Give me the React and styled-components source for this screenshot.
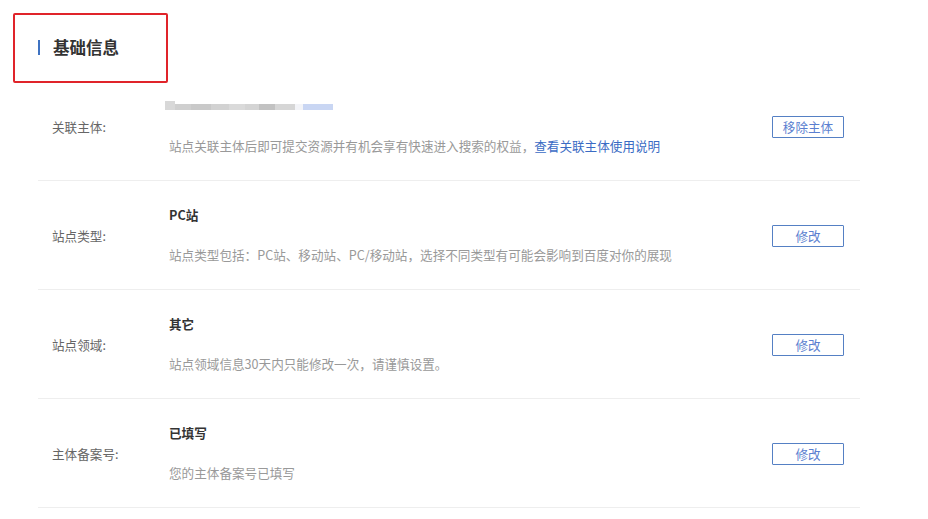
import React from "react";
import styled, { createGlobalStyle } from "styled-components";

const GlobalStyle = createGlobalStyle`
    body {
        margin: 0;
        background: #fff;
        font-family: "Noto Sans CJK SC", "Noto Sans", sans-serif;
    }
`

const Container = styled.div`
    position: relative;
    width: 928px;
    height: 519px;
    overflow: hidden;
    background: #fff;
`
const Header = styled.div`
    height: 72px;
    box-sizing: border-box;
    padding: 37px 0 0 38px;
    display: flex;
    align-items: flex-start;
`
const Bar = styled.span`
    width: 2px;
    height: 15px;
    margin-top: 3px;
    margin-right: 13px;
    background: #3f73c2;
`
const Title = styled.h2`
    margin: 0;
    font-size: 16.5px;
    line-height: 20px;
    font-weight: 600;
    color: #333;
`
const Annotation = styled.div`
    position: absolute;
    left: 13px;
    top: 13px;
    width: 151px;
    height: 66px;
    border: 2px solid #e0242a;
    border-radius: 2px;
    pointer-events: none;
`
const List = styled.div`
    margin-left: 38px;
    width: 822px;
`
const Row = styled.div`
    height: 109px;
    box-sizing: border-box;
    display: grid;
    grid-template-columns: 117px 1fr auto;
    padding: 0 16px 0 14px;
    border-bottom: 1px solid #eeeeee;
`
const Label = styled.div`
    align-self: center;
    padding-top: 1px;
    font-size: 12.6px;
    line-height: 20px;
    color: #666;
`
const Content = styled.div`
    padding-top: 24px;
    display: flex;
    flex-direction: column;
    gap: 20px;
`
const Value = styled.div`
    font-size: 12.6px;
    line-height: 20px;
    font-weight: 600;
    color: #333;
`
const Desc = styled.div`
    font-size: 12.6px;
    line-height: 20px;
    color: #999;
`
const Link = styled.a`
    color: #3a6bc4;
    text-decoration: none;
    cursor: pointer;
`
const Button = styled.button`
    align-self: center;
    margin-top: 1px;
    width: 72px;
    height: 22px;
    padding: 0;
    border: 1px solid #5580c4;
    border-radius: 1px;
    background: #fff;
    color: #5b7fd0;
    font-family: inherit;
    font-size: 12.6px;
    line-height: 20px;
    cursor: pointer;
`
const Blur = styled.div`
    height: 20px;
    margin-left: -4px;
    display: flex;
    align-items: center;
`
const BlurPiece = styled.span`
    width: ${p => p.w}px;
    height: ${p => p.h || 6}px;
    margin-top: ${p => p.top || 2}px;
    background: ${p => p.c};
    filter: blur(0.4px);
`

const blurPieces = [
    { w: 10, h: 9, top: -1, c: "#d8d8d8" },
    { w: 16, c: "#cfcfcf" },
    { w: 20, c: "#c9c9c9" },
    { w: 18, c: "#d2d2d2" },
    { w: 16, c: "#dadada" },
    { w: 14, c: "#d4d4d4" },
    { w: 16, c: "#c2c2c2" },
    { w: 20, c: "#d6d6d6" },
    { w: 8, c: "#f3f4f8" },
    { w: 30, c: "#c9d6f3" },
]

const rows = [
    {
        label: "关联主体:",
        value: (
            <Blur>
                {blurPieces.map((p, i) => <BlurPiece key={i} {...p} />)}
            </Blur>
        ),
        desc: <>站点关联主体后即可提交资源并有机会享有快速进入搜索的权益，<Link>查看关联主体使用说明</Link></>,
        action: "移除主体",
    },
    {
        label: "站点类型:",
        value: <Value>PC站</Value>,
        desc: "站点类型包括：PC站、移动站、PC/移动站，选择不同类型有可能会影响到百度对你的展现",
        action: "修改",
    },
    {
        label: "站点领域:",
        value: <Value>其它</Value>,
        desc: "站点领域信息30天内只能修改一次，请谨慎设置。",
        action: "修改",
    },
    {
        label: "主体备案号:",
        value: <Value>已填写</Value>,
        desc: "您的主体备案号已填写",
        action: "修改",
    },
]

const App = () => {
    return (
        <Container>
            <GlobalStyle />
            <Header>
                <Bar />
                <Title>基础信息</Title>
            </Header>
            <Annotation />
            <List>
                {rows.map(row => (
                    <Row key={row.label}>
                        <Label>{row.label}</Label>
                        <Content>
                            {row.value}
                            <Desc>{row.desc}</Desc>
                        </Content>
                        <Button>{row.action}</Button>
                    </Row>
                ))}
            </List>
        </Container>
    )
}
export default App
